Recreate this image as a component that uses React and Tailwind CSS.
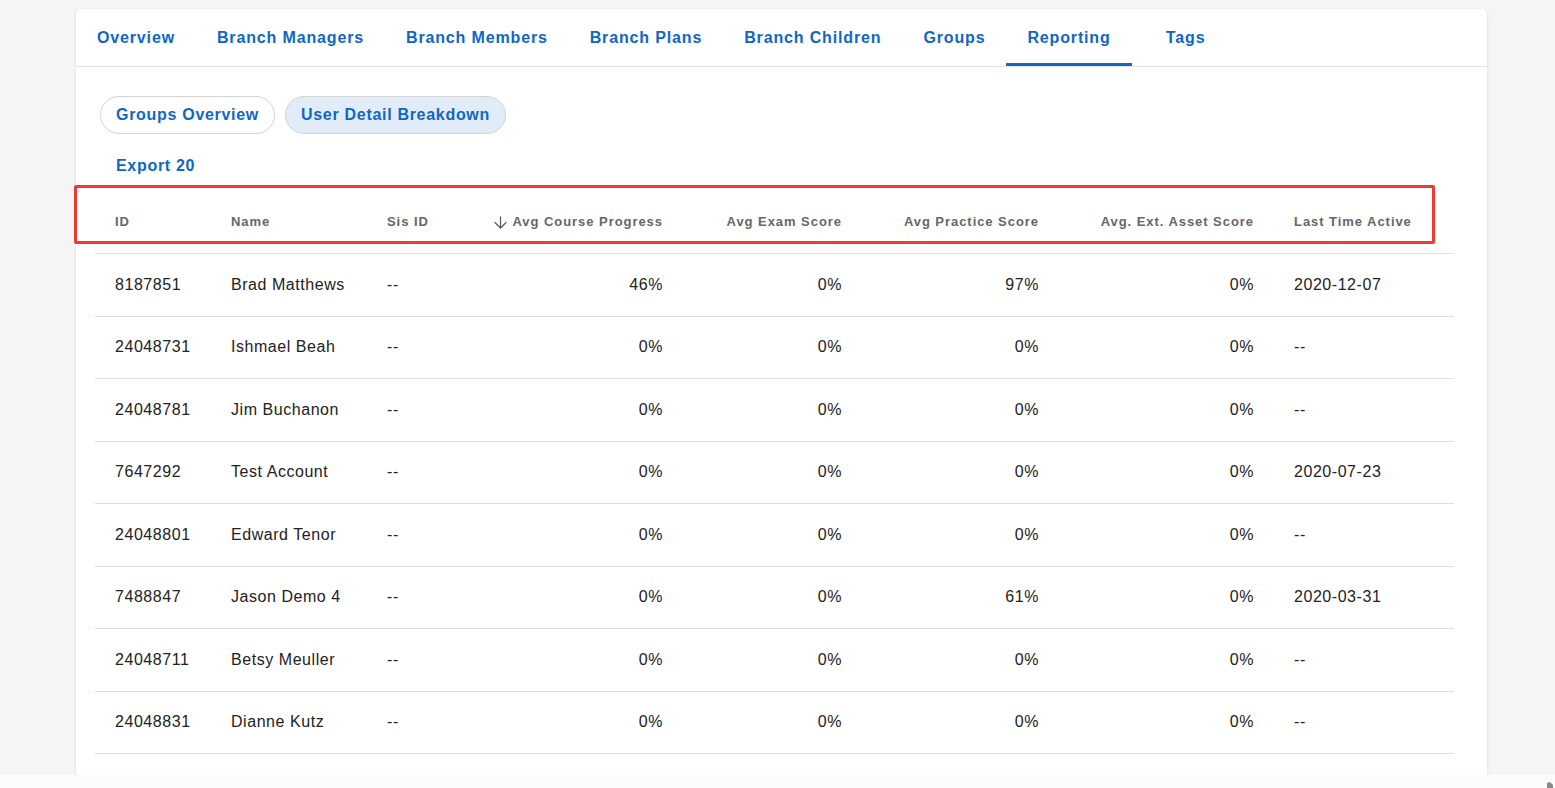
import React, { useState } from 'react';
import { ArrowDown } from 'lucide-react';

const tabs = [
  'Overview',
  'Branch Managers',
  'Branch Members',
  'Branch Plans',
  'Branch Children',
  'Groups',
  'Reporting',
  'Tags',
];

const rows = [
  { id: '8187851', name: 'Brad Matthews', course: '46%', exam: '0%', practice: '97%', ext: '0%', last: '2020-12-07' },
  { id: '24048731', name: 'Ishmael Beah', course: '0%', exam: '0%', practice: '0%', ext: '0%', last: '--' },
  { id: '24048781', name: 'Jim Buchanon', course: '0%', exam: '0%', practice: '0%', ext: '0%', last: '--' },
  { id: '7647292', name: 'Test Account', course: '0%', exam: '0%', practice: '0%', ext: '0%', last: '2020-07-23' },
  { id: '24048801', name: 'Edward Tenor', course: '0%', exam: '0%', practice: '0%', ext: '0%', last: '--' },
  { id: '7488847', name: 'Jason Demo 4', course: '0%', exam: '0%', practice: '61%', ext: '0%', last: '2020-03-31' },
  { id: '24048711', name: 'Betsy Meuller', course: '0%', exam: '0%', practice: '0%', ext: '0%', last: '--' },
  { id: '24048831', name: 'Dianne Kutz', course: '0%', exam: '0%', practice: '0%', ext: '0%', last: '--' },
];

// column widths taken from the screenshot
const cols = 'grid grid-cols-[116px_156px_106px_210px_179px_197px_215px_180px]';

export default function App() {
  const [activeTab, setActiveTab] = useState('Reporting');
  const [view, setView] = useState('User Detail Breakdown');

  return (
    <div className="h-[788px] w-full overflow-hidden bg-[#f5f5f5] flex flex-col font-['Liberation_Sans',Arial,sans-serif]">
      <div className="flex-1 overflow-hidden pt-[9px]">
        <div className="relative ml-[76px] w-[1411px] bg-white rounded-[5px] shadow-[0_1px_3px_rgba(0,0,0,0.14)] pb-10">

          {/* Tabs */}
          <nav className="flex h-[58px] border-b border-[#e2e2e2]">
            {tabs.map((tab) => {
              const isActive = activeTab === tab;
              return (
                <button
                  key={tab}
                  onClick={() => setActiveTab(tab)}
                  className={`h-full flex items-center justify-center whitespace-nowrap text-[16px] font-bold tracking-[0.85px] text-[#0f67c4] border-b-[3px] pt-[3px] ${
                    tab === 'Tags' ? 'min-w-[108px] px-[21px]' : 'px-[21px]'
                  } ${isActive ? 'border-[#1467c2]' : 'border-transparent'}`}
                >
                  {tab}
                </button>
              );
            })}
          </nav>

          <div className="px-[19px]">
            {/* View switcher */}
            <div className="flex gap-[10px] mt-[29px] ml-[5px]">
              {['Groups Overview', 'User Detail Breakdown'].map((v) => (
                <button
                  key={v}
                  onClick={() => setView(v)}
                  className={`h-[38px] px-[15px] rounded-full border border-[#d4d4d4] text-[16px] font-bold tracking-[0.7px] text-[#0f67c4] whitespace-nowrap ${
                    view === v ? 'bg-[#e1ecf8]' : 'bg-white'
                  }`}
                >
                  {v}
                </button>
              ))}
            </div>

            <button className="mt-[14px] ml-[5px] h-[36px] px-4 text-[16px] font-bold tracking-[0.7px] text-[#0f67c4]">
              Export 20
            </button>

            {/* Table */}
            <div className="mt-[7px] w-[1359px]">
              <div className={`${cols} h-[63px] items-center border-b border-[#e0e0e0] text-[13px] font-bold tracking-[0.95px] text-[#666] whitespace-nowrap`}>
                <div className="px-5">ID</div>
                <div className="px-5">Name</div>
                <div className="px-5">Sis ID</div>
                <div className="px-5 flex items-center justify-end gap-[2px]">
                  <ArrowDown size={19} strokeWidth={1.5} className="text-[#555] shrink-0" />
                  <span>Avg Course Progress</span>
                </div>
                <div className="px-5 text-right">Avg Exam Score</div>
                <div className="px-5 text-right">Avg Practice Score</div>
                <div className="px-5 text-right">Avg. Ext. Asset Score</div>
                <div className="px-5">Last Time Active</div>
              </div>

              {rows.map((r) => (
                <div key={r.id} className={`${cols} h-[62.5px] items-center border-b border-[#e0e0e0] text-[16px] tracking-[0.55px] text-[#222]`}>
                  <div className="px-5">{r.id}</div>
                  <div className="px-5">{r.name}</div>
                  <div className="px-5">--</div>
                  <div className="px-5 text-right">{r.course}</div>
                  <div className="px-5 text-right">{r.exam}</div>
                  <div className="px-5 text-right">{r.practice}</div>
                  <div className="px-5 text-right">{r.ext}</div>
                  <div className="px-5">{r.last}</div>
                </div>
              ))}
            </div>
          </div>

          {/* Highlight annotation over the header row */}
          <div className="absolute left-[-2px] top-[176px] w-[1361px] h-[59px] border-[3px] border-[#ee3a2f] rounded-[2px] pointer-events-none" />
        </div>
      </div>

      {/* Horizontal scrollbar track */}
      <div className="h-[13px] shrink-0 bg-[#fbfbfb] flex justify-end items-end pr-[2px]">
        <svg width="6" height="6" viewBox="0 0 6 6">
          <path d="M0 1 L3 0 L6 3 L6 6 L0 6 Z" fill="#8a8a8a" />
        </svg>
      </div>
    </div>
  );
}
